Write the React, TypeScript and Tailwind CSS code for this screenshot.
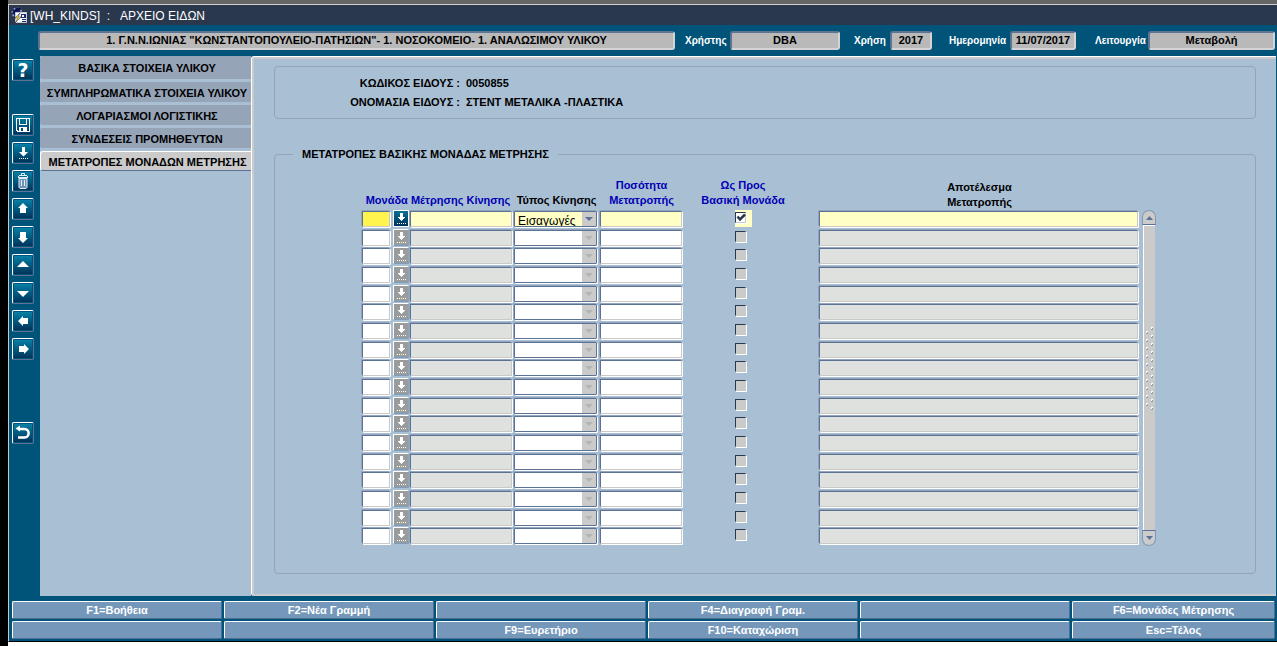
import React from 'react';
import clsx from 'clsx';

const functionKeys = [
    'F1=Βοήθεια',
    'F2=Νέα Γραμμή',
    '',
    'F4=Διαγραφή Γραμ.',
    '',
    'F6=Μονάδες Μέτρησης',
    '',
    '',
    'F9=Ευρετήριο',
    'F10=Καταχώριση',
    '',
    'Esc=Τέλος',
];

const tabs = [
    'ΒΑΣΙΚΑ ΣΤΟΙΧΕΙΑ ΥΛΙΚΟΥ',
    'ΣΥΜΠΛΗΡΩΜΑΤΙΚΑ ΣΤΟΙΧΕΙΑ ΥΛΙΚΟΥ',
    'ΛΟΓΑΡΙΑΣΜΟΙ ΛΟΓΙΣΤΙΚΗΣ',
    'ΣΥΝΔΕΣΕΙΣ ΠΡΟΜΗΘΕΥΤΩΝ',
    'ΜΕΤΑΤΡΟΠΕΣ ΜΟΝΑΔΩΝ ΜΕΤΡΗΣΗΣ',
];

const rows = Array.from({ length: 18 }, (_, i) => i);

const bevel =
    'block h-4 w-full rounded-[1px] border border-t-[#5b7294] border-l-[#5b7294] shadow-[1px_1px_0_#fff,-1px_-1px_0_#93a5bd] outline-none';

const ToolButton: React.FC<{ label: string; className?: string; children: React.ReactNode }> = ({
    label,
    className,
    children,
}) => (
    <button
        type="button"
        aria-label={label}
        className={clsx(
            'flex size-[22px] items-center justify-center rounded-[2px] border border-t-white border-l-white border-r-[#5f7393] border-b-[#5f7393] p-px',
            className
        )}
    >
        <span className="flex size-[18px] items-center justify-center bg-linear-to-b from-[#0a80a6] via-[#005a80] to-[#00345a] text-white">
            {children}
        </span>
    </button>
);

const Glyph: React.FC<{ points: string }> = ({ points }) => (
    <svg width="18" height="18" viewBox="0 0 18 18" fill="#fff">
        <polygon points={points} />
    </svg>
);

const Toolbar: React.FC = () => (
    <div className="flex w-[31px] shrink-0 flex-col gap-[6px] pt-[3px] pl-[3px]">
        <ToolButton label="Βοήθεια" className="mb-[27px]">
            <span className="font-['DejaVu_Sans'] text-[19px] leading-[18px] font-bold">?</span>
        </ToolButton>
        <ToolButton label="Αποθήκευση">
            <svg width="18" height="18" viewBox="0 0 18 18" shapeRendering="crispEdges">
                <path d="M2 2h14v14H3v-1H2zM3 3v11h1v1h11V3z" fill="#fff" fillRule="evenodd" />
                <path d="M5 3h1v5h6V3h1v6H5z" fill="#fff" />
                <path d="M5 11h8v4H5zM7 12v3h2v-3z" fill="#fff" fillRule="evenodd" />
            </svg>
        </ToolButton>
        <ToolButton label="Καταχώριση">
            <svg width="18" height="18" viewBox="0 0 18 18" fill="#fff">
                <path d="M8 3h3v5h3l-4.5 4.5L5 8h3z" />
                <path d="M5 14.5h10" stroke="#fff" strokeDasharray="1 1" />
            </svg>
        </ToolButton>
        <ToolButton label="Διαγραφή">
            <svg width="18" height="18" viewBox="0 0 18 18" fill="none" stroke="#e4ecf4">
                <path d="M5 6.5h8v9l-1 1H6l-1-1z" fill="#6e93ba" />
                <path d="M4 5.5h10M5 3.5h8M7.5 3V1.5h3V3M4.5 4v1M13.5 4v1" />
                <path d="M7.5 8v6M10.5 8v6" />
            </svg>
        </ToolButton>
        <ToolButton label="Προηγούμενη εγγραφή">
            <Glyph points="9,3 14,8 12,8 12,13 6,13 6,8 4,8" />
        </ToolButton>
        <ToolButton label="Επόμενη εγγραφή">
            <Glyph points="9,15 14,10 12,10 12,4 6,4 6,10 4,10" />
        </ToolButton>
        <ToolButton label="Προηγούμενη ομάδα">
            <Glyph points="9,5 15,11 3,11" />
        </ToolButton>
        <ToolButton label="Επόμενη ομάδα">
            <Glyph points="3,7 15,7 9,13" />
        </ToolButton>
        <ToolButton label="Αριστερά">
            <Glyph points="4,9 9,4 9,6 14,6 14,12 9,12 9,14" />
        </ToolButton>
        <ToolButton label="Δεξιά">
            <Glyph points="15,9 10,4 10,6 5,6 5,12 10,12 10,14" />
        </ToolButton>
        <ToolButton label="Επιστροφή" className="mt-[56px]">
            <svg width="18" height="18" viewBox="0 0 18 18" fill="none" stroke="#fff">
                <path d="M4 5h6.5c5.5 0 5.5 8.5 0 8.5H4" strokeWidth="2.5" />
                <path d="M1.5 4.5L6 1.5v6z" fill="#fff" stroke="none" />
            </svg>
        </ToolButton>
    </div>
);

const AppIcon: React.FC = () => (
    <svg width="17" height="17" viewBox="0 0 17 17">
        <circle cx="6" cy="6" r="4.5" fill="#16206a" stroke="#8ea4d8" strokeWidth="2" strokeDasharray="1.5 2" />
        <path d="M3 6.5C4 3 7 2 9 2.5" fill="none" stroke="#0c1450" strokeWidth="3" />
        <path d="M4.5 5.5h11v10h-11z" fill="#f4f6fa" stroke="#c8ccd4" />
        <path d="M10 7h5v4h-5zM11 12h4v1h-4zM11 14h4v1h-4z" fill="#1c2a78" />
        <path d="M11 8h2v2h-2z" fill="#fff" />
        <path d="M9 6L4 11h3l-3 5 6-6H7z" fill="#ffe93b" stroke="#20243c" strokeWidth="0.5" />
    </svg>
);

const HeaderField: React.FC<{ id: string; label: string; value: string; width: string; gap: string }> = ({
    id,
    label,
    value,
    width,
    gap,
}) => (
    <>
        <label htmlFor={id} className={clsx('text-[10px] font-bold text-white', gap)}>
            {label}
        </label>
        <input
            id={id}
            readOnly
            defaultValue={value}
            className={clsx(
                'h-[19px] rounded-[3px] border-2 border-t-[#5f7393] border-r-[#d4d4d4] border-b-[#d4d4d4] border-l-[#5f7393] bg-[#b9b9b9] text-center text-[11px] font-bold text-black outline-none',
                width
            )}
        />
    </>
);

const DownArrow: React.FC = () => (
    <svg width="13" height="13" viewBox="0 0 13 13" fill="#fff" shapeRendering="crispEdges">
        <path d="M5 1h3v4h2v1H9v1H8v1H7v1H6V8H5V7H4V6H3V5h2z" />
        <path d="M2 11h1v1H2zM4 11h1v1H4zM6 11h1v1H6zM8 11h1v1H8zM10 11h1v1h-1z" />
    </svg>
);

const ConversionRow: React.FC<{ index: number }> = ({ index }) => {
    const active = index === 0;
    return (
        <tr className="align-top">
            <td className="pt-px pr-[2px]">
                <input
                    aria-label={`Μονάδα ${index + 1}`}
                    className={clsx(bevel, 'border-r-[#c9c9c9] border-b-[#c9c9c9]', active ? 'bg-[#fff44d]' : 'bg-white')}
                />
            </td>
            <td className="pr-px pl-px">
                <button
                    type="button"
                    aria-label={`Λίστα μονάδων ${index + 1}`}
                    className={clsx(
                        'flex h-[17px] w-full items-center justify-center border',
                        active
                            ? 'border-white bg-linear-to-b from-[#0a7096] to-[#00345a]'
                            : 'border-t-white border-r-[#8ea3bd] border-b-[#7c9cc0] border-l-white bg-[#9a9c9c]'
                    )}
                >
                    <DownArrow />
                </button>
            </td>
            <td className="pt-px pr-[2px]">
                <input
                    readOnly
                    aria-label={`Μέτρησης Κίνησης ${index + 1}`}
                    className={clsx(
                        bevel,
                        'border-r-[#c9c9c9] border-b-[#c9c9c9]',
                        active ? 'bg-[#ffffc6]' : 'bg-[#dfe1de]'
                    )}
                />
            </td>
            <td className="pt-px pr-[2px]">
                <div className="relative">
                    <select
                        aria-label={`Τύπος Κίνησης ${index + 1}`}
                        disabled={!active}
                        className={clsx(
                            bevel,
                            'appearance-none overflow-hidden border-r-[#5b7294] border-b-[#5b7294] pt-[2px] pl-[3px] text-[12px] leading-[14px] font-normal text-black opacity-100',
                            active ? 'bg-[#ffffc6]' : 'bg-white'
                        )}
                    >
                        {active ? <option>Εισαγωγές</option> : <option></option>}
                    </select>
                    <span
                        className={clsx(
                            'pointer-events-none absolute inset-y-px right-px flex w-[14px] items-center justify-center bg-[#cbcbcb]',
                            active ? 'text-[#5b7294]' : 'text-[#b4b4b4]'
                        )}
                    >
                        <svg width="8" height="4" viewBox="0 0 8 4" fill="currentColor">
                            <path d="M0 0h8L4 4z" />
                        </svg>
                    </span>
                </div>
            </td>
            <td className="pt-px pr-[2px] pl-px">
                <input
                    aria-label={`Ποσότητα Μετατροπής ${index + 1}`}
                    className={clsx(
                        bevel,
                        'border-r-[#c9c9c9] border-b-[#c9c9c9]',
                        active ? 'bg-[#ffffc6]' : 'bg-white'
                    )}
                />
            </td>
            <td>
                <label
                    className={clsx('relative mx-auto block h-[17px] w-[17px] pt-[2px]', active && 'bg-[#ffffc6]')}
                >
                    <input
                        type="checkbox"
                        aria-label={`Ως Προς Βασική Μονάδα ${index + 1}`}
                        defaultChecked={active}
                        className={clsx(
                            'block size-[11px] appearance-none border border-t-[#2a384e] border-r-[#c9c9c9] border-b-[#c9c9c9] border-l-[#2a384e] shadow-[1px_1px_0_#fff]',
                            active ? 'bg-white' : 'bg-[#cbcbcb]'
                        )}
                    />
                    {active && (
                        <svg
                            className="pointer-events-none absolute top-[3px] left-px"
                            width="10"
                            height="9"
                            viewBox="0 0 10 9"
                            fill="none"
                            stroke="#2a384e"
                            strokeWidth="2.5"
                        >
                            <path d="M1.5 3.5L4 6.5L9 1.5" />
                        </svg>
                    )}
                </label>
            </td>
            <td className="pt-px pr-[2px] pl-[17px]">
                <input
                    readOnly
                    aria-label={`Αποτέλεσμα Μετατροπής ${index + 1}`}
                    className={clsx(
                        bevel,
                        'border-r-[#c9c9c9] border-b-[#c9c9c9]',
                        active ? 'bg-[#ffffc6]' : 'bg-[#dfe1de]'
                    )}
                />
            </td>
        </tr>
    );
};

const ScrollBar: React.FC = () => (
    <div className="mt-8 ml-[2px] flex w-[14px] shrink-0 flex-col">
        <button
            type="button"
            aria-label="Πάνω"
            className="flex h-[15px] items-center justify-center rounded-t-[7px] border border-[#8598b2] border-b-[#5b7294] bg-[#cbcbcb]"
        >
            <svg width="7" height="4" viewBox="0 0 7 4" fill="#5b7294">
                <path d="M0 4h7L3.5 0z" />
            </svg>
        </button>
        <div className="mr-px ml-px flex flex-1 justify-center border-t border-l border-white bg-[#cbcbcb] pt-[101px]">
            <svg width="9" height="84" viewBox="0 0 9 84" shapeRendering="crispEdges">
                {Array.from({ length: 11 }, (_, i) => (
                    <g key={i}>
                        <path d={`M6 ${i * 8}h2v1h-1v1h-1z`} fill="#fff" />
                        <path d={`M8 ${i * 8 + 1}v2h-2v-1h1v-1z`} fill="#8fa3bd" />
                        {i < 10 && <path d={`M1 ${i * 8 + 4}h2v1h-1v1h-1z`} fill="#fff" />}
                        {i < 10 && <path d={`M3 ${i * 8 + 5}v2h-2v-1h1v-1z`} fill="#8fa3bd" />}
                    </g>
                ))}
            </svg>
        </div>
        <button
            type="button"
            aria-label="Κάτω"
            className="flex h-4 items-center justify-center rounded-b-[7px] border border-[#8598b2] border-t-[#5b7294] bg-[#cbcbcb]"
        >
            <svg width="7" height="4" viewBox="0 0 7 4" fill="#5b7294">
                <path d="M0 0h7L3.5 4z" />
            </svg>
        </button>
    </div>
);

const ConversionTable: React.FC = () => (
    <table className="h-[368px] min-w-0 flex-1 table-fixed border-collapse">
        <colgroup>
            <col className="w-[30px]" />
            <col className="w-[18px]" />
            <col className="w-[104px]" />
            <col className="w-[85px]" />
            <col className="w-[85px]" />
            <col className="w-[118px]" />
            <col />
        </colgroup>
        <thead>
            <tr className="h-8 align-bottom leading-[15px] whitespace-nowrap text-[#0000b4]">
                <th colSpan={3} className="pb-[2px]">
                    Μονάδα Μέτρησης Κίνησης
                </th>
                <th className="pb-[2px] text-black">Τύπος Κίνησης</th>
                <th className="pb-[2px]">
                    Ποσότητα
                    <br />
                    Μετατροπής
                </th>
                <th className="pb-[2px]">
                    Ως Προς
                    <br />
                    Βασική Μονάδα
                </th>
                <th className="pl-[17px] text-black">
                    Αποτέλεσμα
                    <br />
                    Μετατροπής
                </th>
            </tr>
        </thead>
        <tbody>
            {rows.map((i) => (
                <ConversionRow key={i} index={i} />
            ))}
        </tbody>
    </table>
);

const App: React.FC = () => {
    return (
        <div className="min-h-screen border-l-8 border-black bg-white font-['Liberation_Sans',sans-serif] text-[11px] font-bold text-black">
            <div className="border-t-4 border-[#666]">
                <div className="flex flex-col border-t border-b border-l border-t-[#d0d0d0] border-b-black border-l-[#c9c9c9] bg-[#005379]">
                    <header className="flex h-5 items-center gap-[2px] bg-[#2a384e] pl-[2px]">
                        <AppIcon />
                        <h1 className="pt-px text-[12px] font-normal whitespace-pre text-white">
                            {'[WH_KINDS]  :   ΑΡΧΕΙΟ ΕΙΔΩΝ'}
                        </h1>
                    </header>

                    <div className="flex h-[31px] items-center pr-[2px] pb-px pl-[29px]">
                        <input
                            readOnly
                            aria-label="Μονάδα"
                            defaultValue={
                                '1. Γ.Ν.Ν.ΙΩΝΙΑΣ "ΚΩΝΣΤΑΝΤΟΠΟΥΛΕΙΟ-ΠΑΤΗΣΙΩΝ"- 1. ΝΟΣΟΚΟΜΕΙΟ- 1. ΑΝΑΛΩΣΙΜΟΥ ΥΛΙΚΟΥ'
                            }
                            className="h-[19px] min-w-0 flex-1 rounded-[3px] border-2 border-t-[#5f7393] border-r-[#d4d4d4] border-b-[#d4d4d4] border-l-[#5f7393] bg-[#b9b9b9] text-center text-[11px] font-bold outline-none"
                        />
                        <HeaderField id="user" label="Χρήστης" value="DBA" width="w-[110px]" gap="w-[55px] pl-[10px]" />
                        <HeaderField id="year" label="Χρήση" value="2017" width="w-[42px]" gap="w-[50px] pl-[14px]" />
                        <HeaderField
                            id="date"
                            label="Ημερομηνία"
                            value="11/07/2017"
                            width="w-[66px]"
                            gap="w-[78px] pl-[17px]"
                        />
                        <HeaderField
                            id="mode"
                            label="Λειτουργία"
                            value="Μεταβολή"
                            width="w-[127px]"
                            gap="w-[72px] pl-[19px]"
                        />
                    </div>

                    <div className="flex pr-px">
                        <Toolbar />
                        <nav className="flex w-[211px] shrink-0 flex-col gap-[3px] bg-[#a9bfd4]">
                            {tabs.map((tab, i) => (
                                <button
                                    key={tab}
                                    type="button"
                                    className={clsx(
                                        'pt-[2px] pl-[3px] whitespace-nowrap',
                                        i === 0 ? 'h-[23px]' : 'h-5',
                                        i === tabs.length - 1
                                            ? 'rounded-l-[3px] border-t border-b border-l border-t-white border-b-[#5b7294] border-l-white bg-[#cbcbcb]'
                                            : 'rounded-l-[2px] bg-[#96a4b8]'
                                    )}
                                >
                                    {tab}
                                </button>
                            ))}
                        </nav>

                        <main className="flex min-w-0 flex-1 flex-col rounded-l-[3px] border-t border-l border-white bg-[#cbcbcb] pt-[2px] pb-[2px] pl-[2px]">
                            <div className="flex flex-col bg-[#a9bfd4] pt-[7px] pr-[20px] pb-[20px] pl-5">
                                <section className="grid grid-cols-[185px_1fr] gap-x-[6px] rounded-[4px] border border-[#93a4b8] pt-[7px] pb-[6px] leading-[19px]">
                                    <span className="text-right">ΚΩΔΙΚΟΣ ΕΙΔΟΥΣ :</span>
                                    <span>0050855</span>
                                    <span className="text-right">ΟΝΟΜΑΣΙΑ ΕΙΔΟΥΣ :</span>
                                    <span>ΣΤΕΝΤ ΜΕΤΑΛΙΚΑ -ΠΛΑΣΤΙΚΑ</span>
                                </section>

                                <fieldset className="mt-[29px] min-w-0 rounded-[4px] border border-[#93a4b8] pt-[18px] pb-[27px]">
                                    <legend className="ml-[18px] px-[9px] leading-3">
                                        ΜΕΤΑΤΡΟΠΕΣ ΒΑΣΙΚΗΣ ΜΟΝΑΔΑΣ ΜΕΤΡΗΣΗΣ
                                    </legend>
                                    <div className="flex pr-[99px] pl-[87px]">
                                        <ConversionTable />
                                        <ScrollBar />
                                    </div>
                                </fieldset>
                            </div>
                        </main>
                    </div>

                    <footer className="grid grid-cols-[repeat(5,210fr)_203fr] gap-[2px] pt-[5px] pr-[2px] pb-[2px] pl-[3px]">
                        {functionKeys.map((key, i) => (
                            <button
                                key={i}
                                type="button"
                                aria-label={key || 'Κενό'}
                                className="h-[18px] rounded-[2px] border border-t-white border-r-[#4f6d92] border-b-[#4f6d92] border-l-white bg-[#7598ba] leading-4 text-white"
                            >
                                {key}
                            </button>
                        ))}
                    </footer>
                </div>
            </div>
        </div>
    );
};

export default App;
